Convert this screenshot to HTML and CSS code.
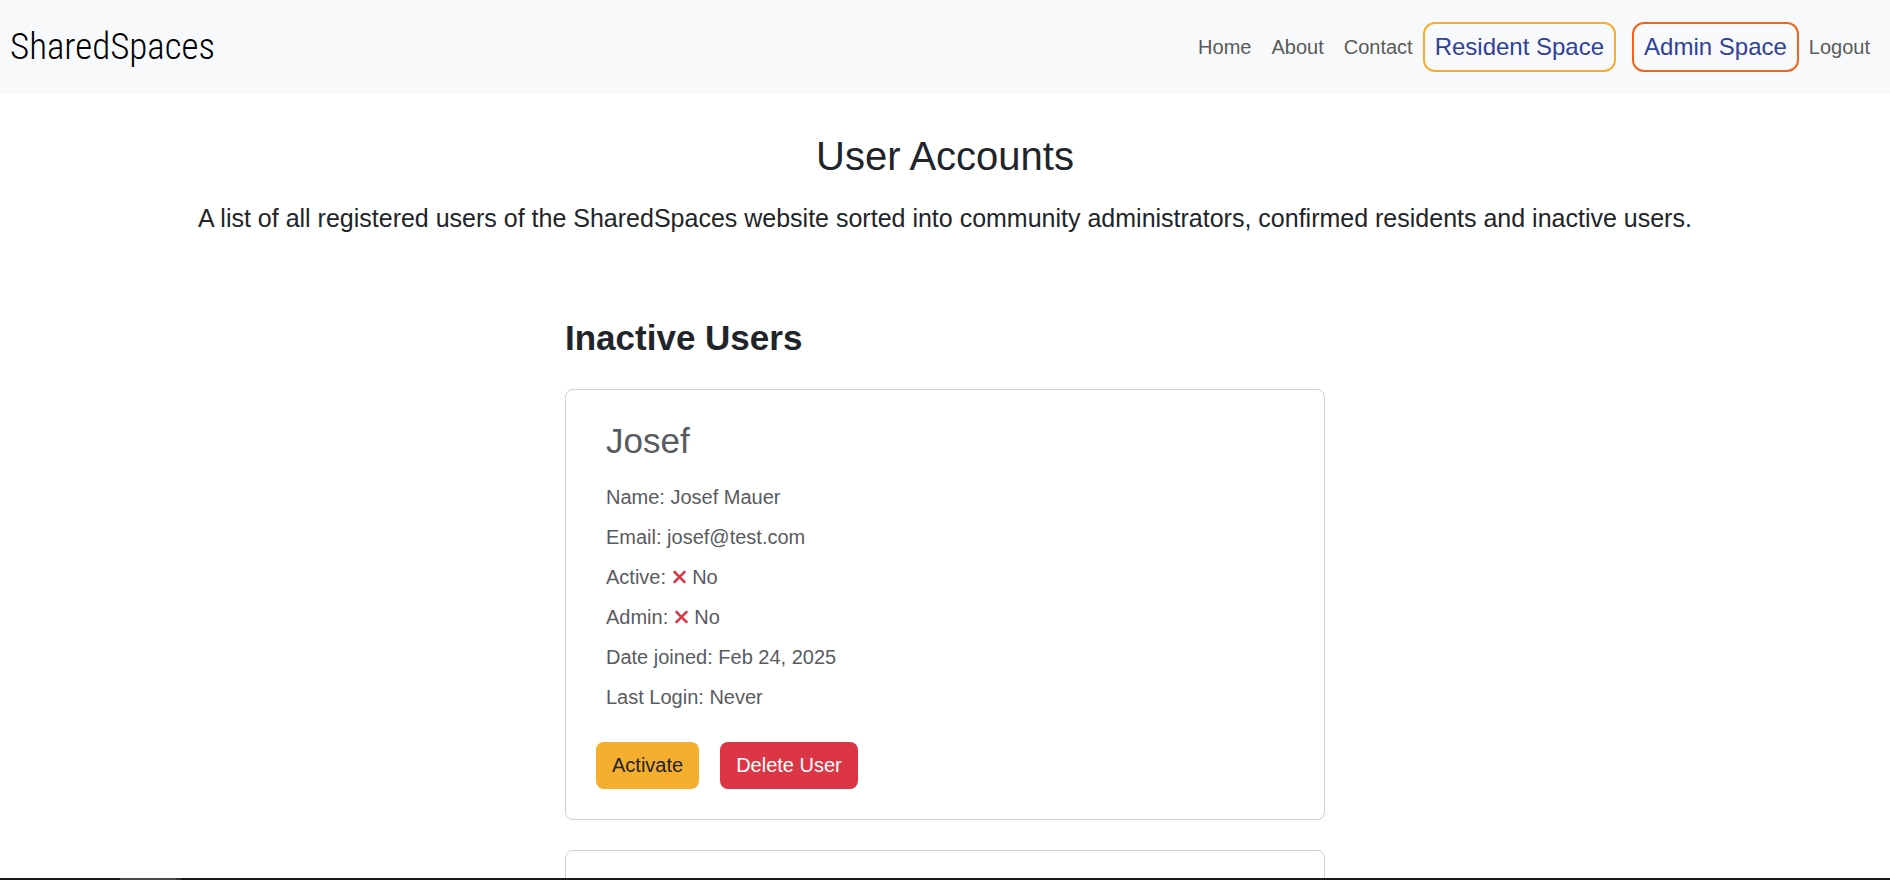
FILE: index.html
```html
<!DOCTYPE html>
<html lang="en">
<head>
<meta charset="utf-8">
<meta name="viewport" content="width=device-width, initial-scale=1">
<title>SharedSpaces - User Accounts</title>
<link rel="stylesheet" href="styles.css">
</head>
<body>
<header class="navbar">
  <a class="brand" href="#">SharedSpaces</a>
  <nav class="nav">
    <a class="nav-link" href="#">Home</a>
    <a class="nav-link" href="#">About</a>
    <a class="nav-link" href="#">Contact</a>
    <a class="space-link space-resident" href="#">Resident Space</a>
    <a class="space-link space-admin" href="#">Admin Space</a>
    <a class="nav-link" href="#">Logout</a>
  </nav>
</header>
<main class="page">
  <div class="intro">
    <h1 class="title">User Accounts</h1>
    <p class="lead">A list of all registered users of the SharedSpaces website sorted into community administrators, confirmed residents and inactive users.</p>
  </div>
  <section class="users">
    <h2 class="section-title">Inactive Users</h2>
    <article class="card">
      <div class="details">
        <h3 class="card-title">Josef</h3>
        <p class="detail">Name: Josef Mauer</p>
        <p class="detail">Email: josef@test.com</p>
        <p class="detail">Active: <svg class="xmark" viewBox="0 0 384 512" aria-hidden="true"><path d="M342.600 150.600c12.500-12.500 12.500-32.800 0-45.300s-32.800-12.500-45.300 0L192 210.700 86.600 105.400c-12.500-12.500-32.800-12.500-45.300 0s-12.500 32.800 0 45.300L146.700 256 41.400 361.400c-12.500 12.500-12.500 32.800 0 45.300s32.800 12.500 45.300 0L192 301.300 297.400 406.600c12.500 12.500 32.800 12.500 45.300 0s12.500-32.800 0-45.300L237.300 256 342.600 150.600z"/></svg> No</p>
        <p class="detail">Admin: <svg class="xmark" viewBox="0 0 384 512" aria-hidden="true"><path d="M342.600 150.600c12.500-12.500 12.500-32.800 0-45.300s-32.800-12.500-45.300 0L192 210.700 86.600 105.400c-12.500-12.500-32.800-12.500-45.300 0s-12.500 32.800 0 45.300L146.700 256 41.400 361.400c-12.500 12.500-12.500 32.800 0 45.300s32.800 12.500 45.300 0L192 301.300 297.400 406.600c12.500 12.500 32.800 12.500 45.300 0s12.500-32.800 0-45.300L237.300 256 342.600 150.600z"/></svg> No</p>
        <p class="detail">Date joined: Feb 24, 2025</p>
        <p class="detail">Last Login: Never</p>
      </div>
      <div class="actions">
        <button class="btn btn-activate" type="button">Activate</button>
        <button class="btn btn-delete" type="button">Delete User</button>
      </div>
    </article>
    <article class="card"></article>
  </section>
</main>
<footer class="bottom-bar"><span class="bar-active"></span><span class="bar-edge"></span></footer>
</body>
</html>
```
FILE: styles.css
```css
*, *::before, *::after {
  box-sizing: border-box;
}

body {
  margin: 0;
  height: 100vh;
  display: flex;
  flex-direction: column;
  background: #fff;
  color: #212529;
  font-family: "Liberation Sans", Arial, sans-serif;
  font-size: 20px;
  line-height: 30px;
}

h1, h2, h3, p {
  margin: 0;
}

a {
  text-decoration: none;
}

.navbar {
  flex: none;
  display: flex;
  align-items: center;
  justify-content: space-between;
  padding: 22px 10px;
  background: #f8f9fb;
}

.brand {
  color: #000;
  font-family: "Roboto Condensed", "Liberation Sans Narrow", Roboto, sans-serif;
  font-size: 37px;
  font-weight: 300;
  line-height: 48px;
}

.nav {
  display: flex;
  align-items: center;
}

.nav-link {
  padding: 10px;
  color: #5a5b58;
}

.space-link {
  padding: 5px 10px;
  border: 2px solid;
  border-radius: 12px;
  font-size: 24px;
  line-height: 36px;
  color: #2f4199;
}

.space-resident {
  border-color: #f7ae2d;
}

.space-admin {
  margin-left: 16px;
  border-color: #f26419;
}

.page {
  flex: 1;
  min-height: 0;
  overflow: hidden;
  padding: 38px 16px 0;
}

.intro {
  text-align: center;
}

.title {
  font-size: 40px;
  font-weight: 400;
  line-height: 48px;
}

.lead {
  margin-top: 19px;
  font-size: 25px;
  line-height: 38px;
}

.users {
  max-width: 760px;
  margin: 80px auto 0;
}

.section-title {
  margin-bottom: 30px;
  font-size: 35px;
  line-height: 42px;
}

.card {
  min-height: 200px;
  margin-bottom: 30px;
  padding: 30px;
  border: 1px solid #d0d1d3;
  border-radius: 8px;
}

.details {
  padding: 0 10px;
  color: #585b5f;
}

.card-title {
  margin-bottom: 20px;
  font-size: 35px;
  font-weight: 400;
  line-height: 42px;
}

.detail {
  margin-bottom: 10px;
}

.xmark {
  width: 15px;
  height: 20px;
  vertical-align: -3px;
  fill: #dc3545;
}

.actions {
  display: flex;
  gap: 21px;
  margin-top: 30px;
}

.btn {
  padding: 8px 16px;
  border: 0;
  border-radius: 8px;
  font: inherit;
  line-height: 31px;
}

.btn-activate {
  background: #f5ae2d;
  color: #212529;
}

.btn-delete {
  background: #dc3545;
  color: #fff;
}

.bottom-bar {
  flex: none;
  display: flex;
  height: 2px;
  padding-left: 120px;
  background: #1b181c;
}

.bar-active {
  width: 56px;
  background: #4b494c;
}

.bar-edge {
  width: 5px;
  background: #363437;
}
```
